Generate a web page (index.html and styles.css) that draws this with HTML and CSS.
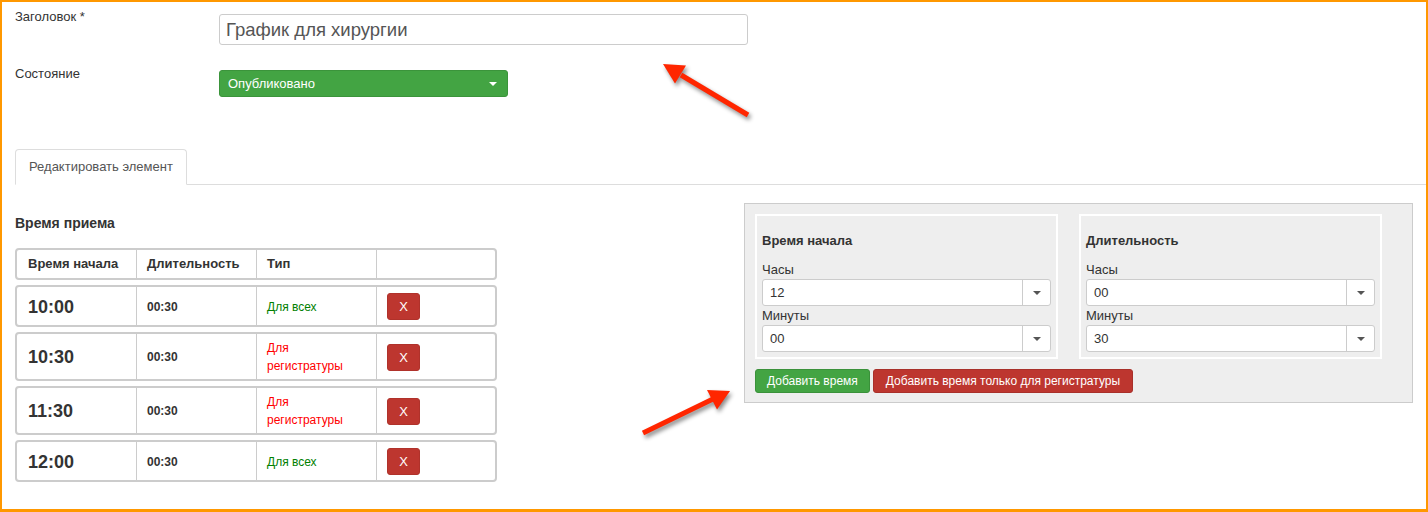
FILE: index.html
```html
<!DOCTYPE html>
<html lang="ru">
<head>
<meta charset="utf-8">
<title>График для хирургии</title>
<link rel="stylesheet" href="styles.css">
</head>
<body>
<div class="frame">
  <div class="form-row row-title">
    <label class="lbl">Заголовок *</label>
    <input class="title-input" type="text" value="График для хирургии">
  </div>
  <div class="form-row row-state">
    <label class="lbl">Состояние</label>
    <div class="status-select"><span>Опубликовано</span><span class="caret caret-white"></span></div>
  </div>

  <ul class="tabs">
    <li class="tab">Редактировать элемент</li>
  </ul>

  <div class="content">
    <div class="left">
      <h3 class="section-title">Время приема</h3>
      <div class="sched">
        <div class="srow head">
          <div class="cell c1">Время начала</div>
          <div class="cell">Длительность</div>
          <div class="cell">Тип</div>
          <div class="cell"></div>
        </div>
        <div class="srow">
          <div class="cell c1 time">10:00</div>
          <div class="cell dur">00:30</div>
          <div class="cell"><span class="type all">Для всех</span></div>
          <div class="cell"><button class="btn-x">X</button></div>
        </div>
        <div class="srow">
          <div class="cell c1 time">10:30</div>
          <div class="cell dur">00:30</div>
          <div class="cell"><span class="type reg">Для регистратуры</span></div>
          <div class="cell"><button class="btn-x">X</button></div>
        </div>
        <div class="srow">
          <div class="cell c1 time">11:30</div>
          <div class="cell dur">00:30</div>
          <div class="cell"><span class="type reg">Для регистратуры</span></div>
          <div class="cell"><button class="btn-x">X</button></div>
        </div>
        <div class="srow">
          <div class="cell c1 time">12:00</div>
          <div class="cell dur">00:30</div>
          <div class="cell"><span class="type all">Для всех</span></div>
          <div class="cell"><button class="btn-x">X</button></div>
        </div>
      </div>
    </div>

    <div class="right">
      <div class="panel">
        <div class="boxes">
          <div class="box">
            <h4 class="box-title">Время начала</h4>
            <div class="field-label">Часы</div>
            <div class="select"><span class="val">12</span><span class="sel-btn"><span class="caret"></span></span></div>
            <div class="field-label second">Минуты</div>
            <div class="select"><span class="val">00</span><span class="sel-btn"><span class="caret"></span></span></div>
          </div>
          <div class="box">
            <h4 class="box-title">Длительность</h4>
            <div class="field-label">Часы</div>
            <div class="select"><span class="val">00</span><span class="sel-btn"><span class="caret"></span></span></div>
            <div class="field-label second">Минуты</div>
            <div class="select"><span class="val">30</span><span class="sel-btn"><span class="caret"></span></span></div>
          </div>
        </div>
        <div class="actions">
          <button class="btn btn-green">Добавить время</button>
          <button class="btn btn-red">Добавить время только для регистратуры</button>
        </div>
      </div>
    </div>
  </div>

  <svg class="arrows" width="1428" height="512" viewBox="0 0 1428 512" aria-hidden="true">
    <g class="arrow">
      <line x1="748" y1="115" x2="681" y2="75" stroke="#ff2600" stroke-width="5"/>
      <polygon points="663,64 686,65.5 675,83.5" fill="#ff2600"/>
    </g>
    <g class="arrow">
      <line x1="643" y1="433" x2="713" y2="399" stroke="#ff2600" stroke-width="5"/>
      <polygon points="730,391 707,390 717,409.5" fill="#ff2600"/>
    </g>
  </svg>
</div>
</body>
</html>
```

FILE: styles.css
```css
* { box-sizing: border-box; }
html, body { margin: 0; padding: 0; }
body {
  font-family: "Liberation Sans", Arial, sans-serif;
  font-size: 13px;
  line-height: 18px;
  color: #333;
  background: #fff;
}
.frame {
  position: relative;
  width: 1428px;
  height: 512px;
  overflow: hidden;
  border: 2px solid #ff9800;
  border-bottom-width: 3px;
  padding: 6px 13px 0 13px;
}
.form-row { display: flex; align-items: flex-start; }
.lbl { width: 204px; flex: none; color: #333; }
.row-title { margin-bottom: 20px; }
.title-input {
  margin-top: 6px;
  width: 529px;
  height: 31px;
  border: 1px solid #ccc;
  border-radius: 3px;
  padding: 0 6px;
  font-family: "Liberation Sans", Arial, sans-serif;
  font-size: 18.5px;
  color: #555;
  background: #fff;
  outline: none;
}
.status-select {
  margin-top: 5px;
  width: 289px;
  height: 27px;
  background: #43a443;
  border: 1px solid #3b943b;
  border-radius: 3px;
  color: #fff;
  display: flex;
  align-items: center;
  justify-content: space-between;
  padding: 0 10px 0 8px;
}
.caret {
  width: 0; height: 0;
  border-left: 4px solid transparent;
  border-right: 4px solid transparent;
  border-top: 4px solid #555;
}
.caret-white { border-top-color: #fff; }

.tabs {
  list-style: none;
  margin: 52px -13px 0 0;
  padding: 0;
  display: flex;
  border-bottom: 1px solid #ddd;
}
.tab {
  margin-bottom: -1px;
  padding: 8px 13px;
  font-size: 13px;
  line-height: 18px;
  color: #555;
  background: #fff;
  border: 1px solid #ddd;
  border-bottom-color: #fff;
  border-radius: 4px 4px 0 0;
}

.content {
  display: grid;
  grid-template-columns: 729px 1fr;
}
.section-title {
  margin: 29px 0 16px;
  font-size: 14px;
  line-height: 18px;
  font-weight: bold;
  color: #333;
}
.sched { width: 482px; display: flex; flex-direction: column; gap: 5px; }
.srow {
  display: grid;
  grid-template-columns: 119px 120px 120px 1fr;
  border: 2px solid #ccc;
  border-radius: 4px;
}
.cell {
  display: flex;
  align-items: center;
  padding: 5px 10px 4px;
  border-left: 1px solid #ccc;
  font-size: 12px;
  line-height: 18px;
}
.cell.c1 { border-left: 0; padding-left: 11px; }
.head .cell { font-weight: bold; font-size: 13px; padding-top: 5px; padding-bottom: 5px; }
.time { font-size: 18px; font-weight: bold; line-height: 22px; }
.dur { font-weight: bold; }
.type { max-width: 90px; }
.type.all { color: #008000; }
.type.reg { color: #f00; }
.btn-x {
  margin: 1px 0;
  width: 33px;
  height: 27px;
  border: 1px solid #b0322b;
  border-radius: 3px;
  background: #bd362f;
  color: #fff;
  font-family: "Liberation Sans", Arial, sans-serif;
  font-size: 13px;
  padding: 0;
}

.right { padding-top: 18px; }
.panel {
  background: #eee;
  border: 1px solid #ccc;
  padding: 10px 10px 9px;
}
.boxes { display: flex; gap: 21px; }
.box {
  width: 303px;
  border: 2px solid #fff;
  padding: 16px 5px 5px;
}
.box-title { margin: 0 0 10px; font-size: 13px; line-height: 18px; font-weight: bold; }
.field-label { font-size: 13px; line-height: 18px; padding-top: 1px; }
.field-label.second { margin-top: 0; }
.select {
  height: 27px;
  display: flex;
  background: #fff;
  border: 1px solid #ccc;
  border-radius: 3px;
}
.select .val { flex: 1; display: flex; align-items: center; padding-left: 7px; color: #333; }
.sel-btn {
  width: 28px;
  border-left: 1px solid #ccc;
  display: flex;
  align-items: center;
  justify-content: center;
}
.actions { margin-top: 10px; display: flex; gap: 3px; }
.btn {
  font-family: "Liberation Sans", Arial, sans-serif;
  font-size: 12px;
  line-height: 18px;
  padding: 2px 11px;
  border-radius: 3px;
  color: #fff;
}
.btn-green { background: #43a443; border: 1px solid #3a913a; }
.btn-red { background: #bd362f; border: 1px solid #a8302a; padding: 2px 12px; }

.arrows { position: absolute; left: -2px; top: -2px; pointer-events: none; }
.arrow { filter: drop-shadow(2px 3px 2px rgba(0,0,0,0.45)); }
```
